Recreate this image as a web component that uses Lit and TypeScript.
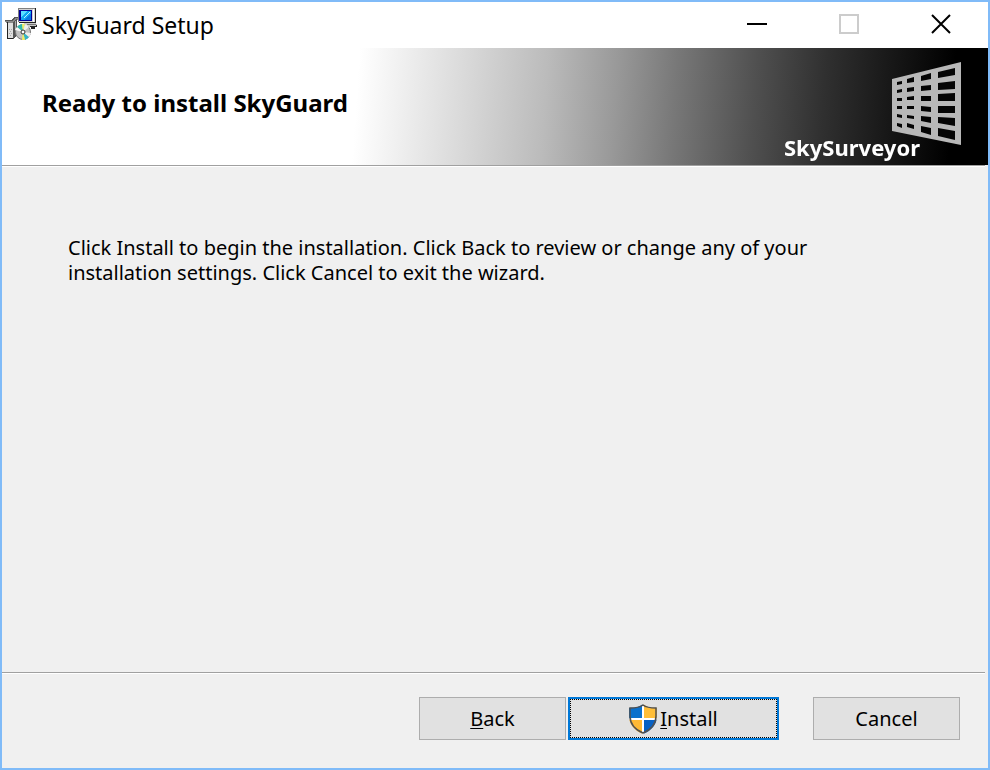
import { LitElement, html, css, svg } from "lit";
import { customElement } from "lit/decorators.js";

// Window panes of the tower: [left, right, rows of (top-left, top-right, bottom-right, bottom-left)]
type Column = [number, number, number[][]];
const PANES: Column[] = [
  [5, 10, [[20, 19, 22, 23], [28, 27, 30, 31], [36, 36, 39, 39], [44, 44, 47, 47], [52, 53, 56, 55], [61, 62, 66, 64]]],
  [15, 22, [[17, 15, 20, 21], [26, 25, 29, 30], [35, 34, 38, 38], [44, 44, 47, 47], [53, 54, 57, 56], [61, 63, 67, 65]]],
  [29, 39, [[14, 11, 17, 19], [24, 23, 28, 29], [34, 34, 39, 39], [44, 45, 50, 49], [54, 55, 61, 59], [64, 66, 73, 70]]],
  [46, 63, [[10, 6, 13, 16], [21, 19, 27, 28], [32, 31, 39, 39], [44, 44, 51, 51], [55, 56, 64, 61], [66, 69, 78, 74]]],
];

@customElement("setup-icon")
class SetupIcon extends LitElement {
  static styles = css`
    :host { display: block; width: 32px; height: 32px; flex: none; }
    svg { display: block; }
  `;
  render() {
    return html`<svg width="32" height="32" viewBox="0 0 32 32" shape-rendering="crispEdges" aria-hidden="true">
      <path d="M14 0H30V14H14Z" fill="#d4d4d4" />
      <path d="M13 0H30V1H14V14H13Z" fill="#808080" />
      <path d="M28 1H29V14H28Z" fill="#fff" />
      <path d="M30 0H31V15H14V14H30Z" fill="#222" />
      <path d="M14 2H27V13H14Z" fill="#000098" />
      <path d="M16 3H26V12H16Z" fill="#10a8f0" />
      <path d="M16 3H22L16 9Z" fill="#58e0ff" />
      <path d="M26 5V12H19Z" fill="#0878e0" />
      <path d="M19 10L25 4" stroke="#b8f4ff" />
      <path d="M18 15H30L32 17V19H24L20 17Z" fill="#c8c8c8" />
      <path d="M22 16H31V17H22Z" fill="#777" />
      <path d="M25 19H32V17H31V18H25ZM26 19H30V21H26Z" fill="#222" />
      <path d="M0 13H7L11 9H13V11L9 15H1Z" fill="#8a8a8a" />
      <path d="M0 12H6L10 9H13V10H11L7 13H0Z" fill="#555" />
      <path d="M3 15H8V31H2V15Z" fill="#dedede" />
      <path d="M2 14H3V31H2ZM2 30H9V31H2Z" fill="#222" />
      <path d="M8 14L12 10V27L8 31Z" fill="#555" />
      <path d="M10 13H11V25H10Z" fill="#aaa" />
      <path d="M4 21h1v1h-1zM6 21h1v1h-1zM5 23h1v1h-1zM4 25h1v1h-1zM6 25h1v1h-1zM5 27h1v1h-1z" fill="#aaa" />
      <g shape-rendering="auto">
        <circle cx="18" cy="24" r="7.5" fill="#c0c0c0" stroke="#777" />
        <path d="M18 24L12 19A8 8 0 0 1 17 16Z" fill="#2eb8b0" />
        <path d="M18 24L17 16A8 8 0 0 1 20 16Z" fill="#eeee66" />
        <path d="M18 24L20 16A8 8 0 0 1 24 19Z" fill="#eee" />
        <path d="M18 24L24 29A8 8 0 0 1 20 32Z" fill="#35b5c5" />
        <path d="M18 24L20 32A8 8 0 0 1 17 32Z" fill="#f0ee60" />
        <path d="M18 24L10 22A8 8 0 0 1 12 19Z" fill="#f5f5f5" />
        <path d="M18 24L26 25A8 8 0 0 1 24 29Z" fill="#eee" />
        <circle cx="18" cy="24" r="2" fill="#fff" stroke="#333" />
      </g>
      <path d="M17 23h2v2h-2z" fill="#fff" />
    </svg>`;
  }
}

@customElement("brand-logo")
class BrandLogo extends LitElement {
  static styles = css`
    :host { display: block; position: relative; width: 177px; height: 97px; flex: none; }
    .tower { position: absolute; left: 108px; top: 0; filter: blur(0.5px); }
    .name {
      position: absolute; left: 0; bottom: 0; color: #fff; filter: blur(0.6px);
      font: 700 22px/24px "Noto Sans", "Open Sans", sans-serif;
    }
  `;
  render() {
    return html`
      <svg class="tower" width="69" height="84" viewBox="0 0 69 84" aria-hidden="true">
        <path d="M0 17L69 0V83L0 69Z" fill="#b8b8b8" />
        ${PANES.map(([l, r, rows]) =>
          rows.map(([a, b, c, d]) => svg`<path d="M${l} ${a}L${r} ${b}V${c}L${l} ${d}Z" fill="#050505" />`)
        )}
      </svg>
      <span class="name">SkySurveyor</span>
    `;
  }
}

@customElement("app-root")
class AppRoot extends LitElement {
  static styles = css`
    :host {
      display: flex; flex-direction: column; box-sizing: border-box; min-height: 100vh;
      border: 2px solid #80bbf8; background: #f0f0f0; color: #000;
      font: 20px/25px "Noto Sans", "Open Sans", sans-serif;
    }
    .titlebar { display: flex; align-items: flex-start; height: 46px; background: #fff; padding: 0 1px 0 3px; }
    setup-icon { margin-top: 6px; }
    .title { flex: 1; margin: 0 0 0 5px; font-size: 23px; line-height: 46px; font-weight: 400; }
    .control {
      display: flex; align-items: center; justify-content: center;
      width: 92px; height: 44px; padding: 0; border: 0; background: none; color: #000;
    }
    .control:disabled { color: #ccc; }
    .banner {
      display: flex; align-items: flex-start; justify-content: space-between;
      box-sizing: border-box; height: 117px; padding: 14px 27px 6px 40px;
      background: linear-gradient(94deg, #fff 36%, #dcdcdc 46%, #bbb 55%, #999 62%, #787878 68%,
        #505050 76%, #303030 83%, #161616 90%, #000 96%);
    }
    .heading { margin: 0; padding-top: 27px; font-size: 24px; line-height: 28px; font-weight: 700; }
    .rule { height: 1px; margin: 0 3px 0 0; border: 0; border-top: 1px solid #a0a0a0; background: #fff; }
    .content { flex: 1; padding: 68px 150px 40px 66px; }
    .message { margin: 0; }
    .actions { display: flex; justify-content: flex-end; padding: 23px 28px 28px; }
    .action {
      display: flex; align-items: center; justify-content: center; box-sizing: border-box;
      width: 147px; height: 43px; padding: 0; border: 1px solid #adadad; background: #e1e1e1;
      color: #000; font: inherit;
    }
    .primary {
      width: 211px; margin: 0 34px 0 2px; border: 2px solid #0078d7;
      outline: 1px dotted #000; outline-offset: -3px; gap: 3px;
    }
    .key { text-decoration: underline; text-decoration-thickness: 1px; text-underline-offset: 2px; }
  `;
  render() {
    return html`
      <header class="titlebar">
        <setup-icon></setup-icon>
        <h1 class="title">SkyGuard Setup</h1>
        <button class="control" aria-label="Minimize">
          <svg width="20" height="20" viewBox="0 0 20 20"><path d="M0 10H20" stroke="currentColor" stroke-width="2" /></svg>
        </button>
        <button class="control" aria-label="Maximize" disabled>
          <svg width="20" height="20" viewBox="0 0 20 20"><path d="M1 1H19V19H1Z" fill="none" stroke="currentColor" stroke-width="2" /></svg>
        </button>
        <button class="control" aria-label="Close">
          <svg width="20" height="20" viewBox="0 0 20 20"><path d="M1 1L19 19M19 1L1 19" stroke="currentColor" stroke-width="2" /></svg>
        </button>
      </header>
      <div class="banner">
        <h2 class="heading">Ready to install SkyGuard</h2>
        <brand-logo></brand-logo>
      </div>
      <hr class="rule" />
      <main class="content">
        <p class="message">
          Click Install to begin the installation. Click Back to review or change any of your
          installation settings. Click Cancel to exit the wizard.
        </p>
      </main>
      <hr class="rule" />
      <footer class="actions">
        <button class="action" accesskey="b"><span><span class="key">B</span>ack</span></button>
        <button class="action primary" accesskey="i">
          <svg width="28" height="30" viewBox="0 0 28 30" aria-hidden="true">
            <clipPath id="shield"><path d="M14 0C10 3 6 4 0 4V12C0 21 6 27 14 30C22 27 28 21 28 12V4C22 4 18 3 14 0Z" /></clipPath>
            <g clip-path="url(#shield)">
              <path d="M0 0H14V15H0Z" fill="#0a70cc" />
              <path d="M14 0H28V15H14Z" fill="#ffbe38" />
              <path d="M0 15H14V30H0Z" fill="#ffb935" />
              <path d="M14 15H28V30H14Z" fill="#0560c4" />
              <path d="M14 0V30M0 15H28" stroke="#fff" stroke-width="2" />
            </g>
            <path d="M14 1C10 4 6 4 1 4V12C1 21 7 26 14 29C21 26 27 21 27 12V4C22 4 18 4 14 1Z" fill="none" stroke="#505050" stroke-width="1.5" />
          </svg>
          <span><span class="key">I</span>nstall</span>
        </button>
        <button class="action">Cancel</button>
      </footer>
    `;
  }
}
